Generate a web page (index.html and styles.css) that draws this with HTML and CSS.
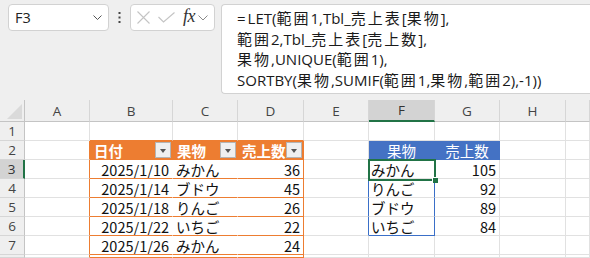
FILE: index.html
```html
<!DOCTYPE html>
<html lang="ja">

<head>
    <meta charset="UTF-8">
    <title>Excel - LET UNIQUE SORTBY</title>
    <link rel="stylesheet" href="styles.css">
</head>

<body>
    <div class="toolbar">
        <div class="namebox">
            <span>F3</span>
            <svg class="chev" width="9" height="5" viewBox="0 0 9 5"><path d="M0.5 0.5 L4.5 4.5 L8.5 0.5" fill="none" stroke="#555" stroke-width="1"/></svg>
        </div>
        <div class="dots">
            <svg width="3" height="11" viewBox="0 0 3 11"><rect x="0.5" y="0" width="2" height="2" fill="#444"/><rect x="0.5" y="4.5" width="2" height="2" fill="#444"/><rect x="0.5" y="9" width="2" height="2" fill="#444"/></svg>
        </div>
        <div class="fxbox">
            <svg width="13" height="13" viewBox="0 0 13 13"><path d="M0.5 0.5 L12.5 12.5 M12.5 0.5 L0.5 12.5" stroke="#c4c4c4" stroke-width="1.1"/></svg>
            <svg class="ok" width="17" height="11" viewBox="0 0 17 11"><path d="M0.5 5 L5.5 10 L16.5 0.5" fill="none" stroke="#c4c4c4" stroke-width="1.1"/></svg>
            <span class="fx">fx</span>
            <svg width="10" height="6" viewBox="0 0 10 6"><path d="M0.5 0.5 L5 5 L9.5 0.5" fill="none" stroke="#8a8a8a" stroke-width="1"/></svg>
        </div>
        <!-- kanji runs get a little extra spacing, the bar font is wider than Noto -->
        <div class="formula">
            <div><span class="eq">=</span>LET(<span class="k">範囲</span>1,Tbl_<span class="k">売上表</span>[<span class="k">果物</span>],</div>
            <div><span class="k">範囲</span>2,Tbl_<span class="k">売上表</span>[<span class="k">売上数</span>],</div>
            <div><span class="k">果物</span>,UNIQUE(<span class="k">範囲</span>1),</div>
            <div>SORTBY(<span class="k">果物</span>,SUMIF(<span class="k">範囲</span>1,<span class="k">果物</span>,<span class="k">範囲</span>2),-1))</div>
        </div>
    </div>

    <div class="sheet">
        <!-- column headers -->
        <div class="corner"><svg width="15" height="15" viewBox="0 0 15 15"><path d="M15 0 L15 15 L0 15 Z" fill="#dadada"/></svg></div>
        <div class="ch">A</div>
        <div class="ch">B</div>
        <div class="ch">C</div>
        <div class="ch">D</div>
        <div class="ch">E</div>
        <div class="ch sel">F</div>
        <div class="ch">G</div>
        <div class="ch">H</div>
        <div class="ch"></div>

        <!-- row 1 -->
        <div class="rh">1</div>
        <div class="c"></div>
        <div class="c top"></div>
        <div class="c top"></div>
        <div class="c top"></div>
        <div class="c"></div>
        <div class="c"></div>
        <div class="c"></div>
        <div class="c"></div>
        <div class="c"></div>

        <!-- row 2 -->
        <div class="rh">2</div>
        <div class="c edge"></div>
        <div class="c th">日付<span class="flt"></span></div>
        <div class="c th">果物<span class="flt"></span></div>
        <div class="c th last">売上数<span class="flt"></span></div>
        <div class="c"></div>
        <div class="c bh">果物</div>
        <div class="c bh">売上数</div>
        <div class="c"></div>
        <div class="c"></div>

        <!-- row 3 -->
        <div class="rh cur">3</div>
        <div class="c edge"></div>
        <div class="c t num">2025/1/10</div>
        <div class="c t">みかん</div>
        <div class="c t last num">36</div>
        <div class="c spl"></div>
        <div class="c sp">みかん</div>
        <div class="c num">105</div>
        <div class="c"></div>
        <div class="c"></div>

        <!-- row 4 -->
        <div class="rh">4</div>
        <div class="c edge"></div>
        <div class="c t num">2025/1/14</div>
        <div class="c t">ブドウ</div>
        <div class="c t last num">45</div>
        <div class="c spl"></div>
        <div class="c sp">りんご</div>
        <div class="c num">92</div>
        <div class="c"></div>
        <div class="c"></div>

        <!-- row 5 -->
        <div class="rh">5</div>
        <div class="c edge"></div>
        <div class="c t num">2025/1/18</div>
        <div class="c t">りんご</div>
        <div class="c t last num">26</div>
        <div class="c spl"></div>
        <div class="c sp">ブドウ</div>
        <div class="c num">89</div>
        <div class="c"></div>
        <div class="c"></div>

        <!-- row 6 -->
        <div class="rh">6</div>
        <div class="c edge"></div>
        <div class="c t num">2025/1/22</div>
        <div class="c t">いちご</div>
        <div class="c t last num">22</div>
        <div class="c spl"></div>
        <div class="c sp end">いちご</div>
        <div class="c num">84</div>
        <div class="c"></div>
        <div class="c"></div>

        <!-- row 7 -->
        <div class="rh">7</div>
        <div class="c edge"></div>
        <div class="c t num">2025/1/26</div>
        <div class="c t">みかん</div>
        <div class="c t last num">24</div>
        <div class="c"></div>
        <div class="c"></div>
        <div class="c"></div>
        <div class="c"></div>
        <div class="c"></div>

        <!-- row 8, only its top edge is on screen -->
        <div class="rh"></div>
        <div class="c edge"></div>
        <div class="c t"></div>
        <div class="c t"></div>
        <div class="c t last"></div>
        <div class="c"></div>
        <div class="c"></div>
        <div class="c"></div>
        <div class="c"></div>
        <div class="c"></div>

        <!-- active cell F3 -->
        <div class="active"><span class="handle"></span></div>
    </div>
</body>

</html>
```

FILE: styles.css
```css
html, body {
    width: 590px;
    height: 258px;
}

body {
    margin: 0;
    overflow: hidden;
    background-color: #efefef;
    font-family: "Noto Sans CJK JP", sans-serif;
    color: #111;
}

/* top bar: name box, fx buttons, formula */
.toolbar {
    height: 100px;
    display: flex;
    align-items: flex-start;
    padding: 4px 0 0 8px;
    box-sizing: border-box;
}

.namebox {
    width: 101px;
    height: 27px;
    background-color: #fff;
    border: 1px solid #d2d2d2;
    border-radius: 4px;
    box-sizing: border-box;
    display: flex;
    align-items: center;
    padding: 0 6px 0 6px;
    font-family: "Open Sans", sans-serif;
    font-size: 14.5px;
    color: #222;
}

.namebox .chev {
    margin-left: auto;
}

.dots {
    width: 21px;
    height: 27px;
    display: flex;
    align-items: center;
    justify-content: center;
}

.fxbox {
    width: 85px;
    height: 27px;
    background-color: #fff;
    border: 1px solid #d2d2d2;
    border-radius: 4px;
    box-sizing: border-box;
    display: flex;
    align-items: center;
    padding-left: 6px;
}

.fxbox .ok {
    margin-left: 8px;
}

.fx {
    font-family: "Liberation Serif", serif;
    font-style: italic;
    font-size: 18px;
    color: #333;
    margin: -3px 3px 0 8px;
    letter-spacing: -0.5px;
}

.formula {
    margin-left: 6px;
    width: 369px;
    height: 90px;
    background-color: #fff;
    border: 1px solid #d2d2d2;
    border-right: none;
    border-radius: 4px 0 0 4px;
    box-sizing: border-box;
    padding: 3px 0 0 15px;
    font-family: "Open Sans", "Noto Sans CJK JP", sans-serif;
    font-size: 15px;
    line-height: 20.5px;
    color: #1a1a1a;
    white-space: nowrap;
    overflow: hidden;
}

.formula .eq {
    margin-right: 2px;
}

.formula .k {
    letter-spacing: 2px;
}

/* the sheet grid */
.sheet {
    position: relative;
    display: grid;
    grid-template-columns: 25px 65px 83px 65px 66px 65px 66px 65px 66px 24px;
    grid-template-rows: 22px repeat(7, 19px) 3px;
    background-color: #fff;
}

.corner, .ch, .rh {
    background-color: #efefef;
    color: #444;
    font-family: "Open Sans", sans-serif;
    font-size: 13.5px;
    display: flex;
    align-items: center;
    justify-content: center;
    box-sizing: border-box;
}

.corner {
    border-right: 1px solid #c4c4c4;
    border-bottom: 1px solid #c4c4c4;
    align-items: flex-end;
    justify-content: flex-end;
    padding: 0 2px 2px 0;
}

.ch {
    border-right: 1px solid #d6d6d6;
    border-bottom: 1px solid #c4c4c4;
}

.ch.sel {
    background-color: #d3d3d3;
    border-bottom: 2px solid #217346;
    color: #333;
}

.rh {
    border-right: 1px solid #c4c4c4;
    border-bottom: 1px solid #d6d6d6;
}

.rh.cur {
    background-color: #d3d3d3;
    border-right: 2px solid #217346;
    color: #333;
}

.c {
    border-right: 1px solid #e1e1e1;
    border-bottom: 1px solid #e1e1e1;
    box-sizing: border-box;
    display: flex;
    align-items: flex-end;
    padding: 0 3px 0 3px;
    font-size: 14.5px;
    line-height: 17px;
    white-space: nowrap;
    overflow: hidden;
}

.num {
    justify-content: flex-end;
}

/* orange table B2:D8 */
.top {
    border-bottom-color: #ed7d31;
}

.edge {
    border-right-color: #ed7d31;
}

.th {
    background-color: #ed7d31;
    color: #fff;
    font-weight: bold;
    border-right-color: #ed7d31;
    border-bottom-color: #ed7d31;
    padding-left: 4px;
    padding-right: 1px;
}

.t {
    border-right-color: #fff;
    border-bottom-color: #ed7d31;
}

.th.last, .t.last {
    border-right-color: #ed7d31;
}

.flt {
    margin-left: auto;
    align-self: center;
    width: 16px;
    height: 16px;
    box-sizing: border-box;
    background-color: #efefef;
    border: 1px solid #b4b4b4;
    position: relative;
}

.flt::after {
    content: "";
    position: absolute;
    left: 4px;
    top: 6px;
    border-left: 3.5px solid transparent;
    border-right: 3.5px solid transparent;
    border-top: 4px solid #555;
}

/* blue headings F2:G2 */
.bh {
    background-color: #4472c4;
    color: #fff;
    justify-content: center;
    border-right-color: #4472c4;
    border-bottom-color: #4472c4;
}

/* spill range F3:F6 */
.spl {
    border-right-color: #3a6fc8;
}

.sp {
    border-right-color: #3a6fc8;
    padding-left: 2px;
}

.sp.end {
    border-bottom-color: #3a6fc8;
}

.active {
    position: absolute;
    left: 368px;
    top: 59px;
    width: 68px;
    height: 22px;
    border: 2px solid #217346;
    box-sizing: border-box;
}

.handle {
    position: absolute;
    right: -4px;
    bottom: -4px;
    width: 5px;
    height: 5px;
    background-color: #217346;
    border-left: 1px solid #fff;
    border-top: 1px solid #fff;
}
```
